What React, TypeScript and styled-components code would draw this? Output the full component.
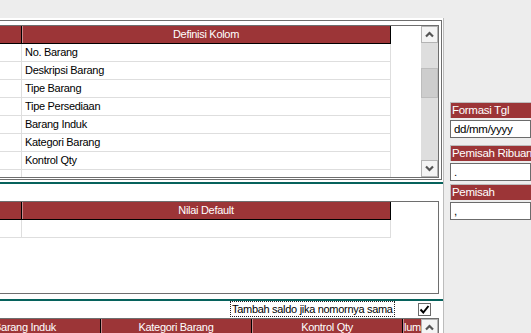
import React from 'react';
import styled, { createGlobalStyle } from 'styled-components';

const RED = '#9c3537';
const TEAL = '#06625c';
const FRAME = '#6e6e6e';
const GRIDLINE = '#dedede';
const FONT = '"Liberation Sans", Arial, sans-serif';

const Global = createGlobalStyle`
  html, body { margin: 0; padding: 0; background: #ededed; }
  body { font-family: ${FONT}; font-size: 11px; letter-spacing: -0.3px; color: #000; }
  * { box-sizing: border-box; }
`;

const Screen = styled.div`
  width: 531px;
  height: 333px;
  overflow: hidden;
  display: flex;
  align-items: flex-start;
  background: #ededed;
`;

const MainPanel = styled.div`
  margin-top: 18px;
  width: 444px;
  height: 315px;
  flex: none;
  background: #fff;
  border-right: 1px solid #bcbcbc;
  display: flex;
  flex-direction: column;
  overflow: hidden;
`;

const OuterFrame = styled.div`
  margin-top: 2px;
  width: 442px;
  border-top: 1px solid ${FRAME};
  border-right: 1px solid ${FRAME};
  border-bottom: 1px solid ${FRAME};
  padding: 4px 2px 1px 0;
`;

const GridBox = styled.div<{ $h?: number }>`
  width: 439px;
  ${(p) => (p.$h ? `height: ${p.$h}px;` : '')}
  border-top: 1px solid ${FRAME};
  border-right: 1px solid ${FRAME};
  border-bottom: ${(p) => (p.$h ? `1px solid ${FRAME}` : 'none')};
  display: flex;
  align-items: stretch;
  overflow: hidden;
  flex: none;
`;

const Table = styled.div`
  width: 391px;
  flex: none;
  display: flex;
  flex-direction: column;
`;

const Filler = styled.div`
  flex: 1;
  min-width: 0;
  overflow: hidden;
`;

const HeaderRow = styled.div<{ $shift?: number }>`
  display: flex;
  height: 18px;
  flex: none;
  border-bottom: 1px solid #000;
  margin-left: ${(p) => p.$shift ?? 0}px;
`;

const HeaderCell = styled.div<{ $w?: number; $first?: boolean }>`
  ${(p) => (p.$w ? `width: ${p.$w}px; flex: none;` : 'flex: 1; min-width: 0;')}
  height: 17px;
  background: ${RED};
  color: #fff;
  line-height: 17px;
  text-align: center;
  white-space: nowrap;
  overflow: hidden;
  border-right: 1px solid #000;
  box-shadow: ${(p) => (p.$first ? 'none' : 'inset 1px 0 0 #c98a8b')};
`;

const TailCell = styled.div`
  flex: 1;
  min-width: 0;
  height: 17px;
  background: ${RED};
  color: #fff;
  line-height: 17px;
  white-space: nowrap;
  overflow: hidden;
  padding-left: 1px;
  box-shadow: inset 1px 0 0 #c98a8b;
`;

const Row = styled.div`
  display: flex;
  height: 18px;
  flex: none;
  border-bottom: 1px solid ${GRIDLINE};
`;

const Cell = styled.div<{ $w?: number }>`
  ${(p) => (p.$w ? `width: ${p.$w}px; flex: none;` : 'flex: 1;')}
  height: 17px;
  line-height: 17px;
  padding-left: 3px;
  white-space: nowrap;
  overflow: hidden;
  border-right: 1px solid ${GRIDLINE};
`;

const ScrollBar = styled.div`
  width: 17px;
  flex: none;
  background: #dedede;
  display: flex;
  flex-direction: column;
`;

const ScrollButton = styled.div`
  height: 17px;
  flex: none;
  background: #f4f4f4;
  border: 1px solid #b4b4b4;
  display: flex;
  align-items: center;
  justify-content: center;
`;

const Track = styled.div`
  flex: 1;
`;

const Thumb = styled.div`
  margin-top: 25px;
  height: 30px;
  background: #cdcdcd;
  border: 1px solid #bdbdbd;
`;

const Splitter = styled.div<{ $gap: number }>`
  margin-top: ${(p) => p.$gap}px;
  height: 2px;
  flex: none;
  background: ${TEAL};
`;

const MiddleSection = styled.div`
  padding-top: 17px;
  flex: none;
`;

const OptionsRow = styled.div`
  height: 17px;
  flex: none;
  display: flex;
  align-items: flex-start;
  justify-content: flex-end;
  padding-right: 12px;
`;

const FocusLabel = styled.div`
  height: 16px;
  width: 165px;
  border: 1px dotted #222;
  line-height: 14px;
  padding-left: 1px;
  white-space: nowrap;
  overflow: hidden;
`;

const CheckBox = styled.div`
  width: 13px;
  height: 13px;
  margin-top: 2px;
  margin-left: 23px;
  border: 1px solid #6a6a6a;
  background: #fff;
  display: flex;
  align-items: center;
  justify-content: center;
`;

const SidePanel = styled.div`
  flex: 1;
  padding-top: 102px;
  padding-left: 6px;
  display: flex;
  flex-direction: column;
`;

const FieldLabel = styled.div<{ $gap: number }>`
  margin-top: ${(p) => p.$gap}px;
  width: 81px;
  height: 16px;
  background: ${RED};
  color: #fff;
  border-top: 1px solid #bdbdbd;
  border-left: 1px solid #bdbdbd;
  font-size: 11.5px;
  line-height: 15px;
  padding-left: 1px;
  white-space: nowrap;
  overflow: hidden;
`;

const FieldInput = styled.div`
  margin-top: 2px;
  width: 81px;
  height: 18px;
  background: #fff;
  border: 1px solid #6b6b6b;
  font-size: 11.5px;
  line-height: 16px;
  padding-left: 3px;
  white-space: nowrap;
  overflow: hidden;
`;

const Chevron = ({ down }: { down?: boolean }) => (
  <svg width="9" height="7" viewBox="0 0 9 7">
    <polyline
      points={down ? '1,1.5 4.5,5 8,1.5' : '1,5.5 4.5,2 8,5.5'}
      fill="none"
      stroke="#555"
      strokeWidth="2.2"
    />
  </svg>
);

const Check = () => (
  <svg width="11" height="11" viewBox="0 0 11 11">
    <path d="M1.5 5.5 L4.3 8.5 L9.5 2" fill="none" stroke="#000" strokeWidth="2" />
  </svg>
);

const columns = [
  'No. Barang',
  'Deskripsi Barang',
  'Tipe Barang',
  'Tipe Persediaan',
  'Barang Induk',
  'Kategori Barang',
  'Kontrol Qty',
  '',
];

export default function App() {
  return (
    <>
      <Global />
      <Screen>
        <MainPanel>
          <OuterFrame>
            <GridBox $h={153}>
              <Table>
                <HeaderRow>
                  <HeaderCell $w={22} $first />
                  <HeaderCell $w={369}>Definisi Kolom</HeaderCell>
                </HeaderRow>
                {columns.map((c, i) => (
                  <Row key={i}>
                    <Cell $w={22} />
                    <Cell $w={369}>{c}</Cell>
                  </Row>
                ))}
              </Table>
              <Filler />
              <ScrollBar>
                <ScrollButton>
                  <Chevron />
                </ScrollButton>
                <Track>
                  <Thumb />
                </Track>
                <ScrollButton>
                  <Chevron down />
                </ScrollButton>
              </ScrollBar>
            </GridBox>
          </OuterFrame>
          <Splitter $gap={2} />
          <MiddleSection>
            <GridBox $h={93}>
              <Table>
                <HeaderRow>
                  <HeaderCell $w={22} $first />
                  <HeaderCell $w={369}>Nilai Default</HeaderCell>
                </HeaderRow>
                <Row>
                  <Cell $w={22} />
                  <Cell $w={369} />
                </Row>
              </Table>
            </GridBox>
          </MiddleSection>
          <Splitter $gap={5} />
          <OptionsRow>
            <FocusLabel>Tambah saldo jika nomornya sama</FocusLabel>
            <CheckBox>
              <Check />
            </CheckBox>
          </OptionsRow>
          <GridBox>
            <Filler>
              <HeaderRow $shift={-50}>
                <HeaderCell $w={151} $first>Barang Induk</HeaderCell>
                <HeaderCell $w={151}>Kategori Barang</HeaderCell>
                <HeaderCell $w={151}>Kontrol Qty</HeaderCell>
                <TailCell>lum</TailCell>
              </HeaderRow>
            </Filler>
            <ScrollBar>
              <ScrollButton>
                <Chevron />
              </ScrollButton>
              <Track />
            </ScrollBar>
          </GridBox>
        </MainPanel>
        <SidePanel>
          <FieldLabel $gap={0}>Formasi Tgl</FieldLabel>
          <FieldInput>dd/mm/yyyy</FieldInput>
          <FieldLabel $gap={7}>Pemisah Ribuan</FieldLabel>
          <FieldInput>.</FieldInput>
          <FieldLabel $gap={3}>Pemisah</FieldLabel>
          <FieldInput>,</FieldInput>
        </SidePanel>
      </Screen>
    </>
  );
}
